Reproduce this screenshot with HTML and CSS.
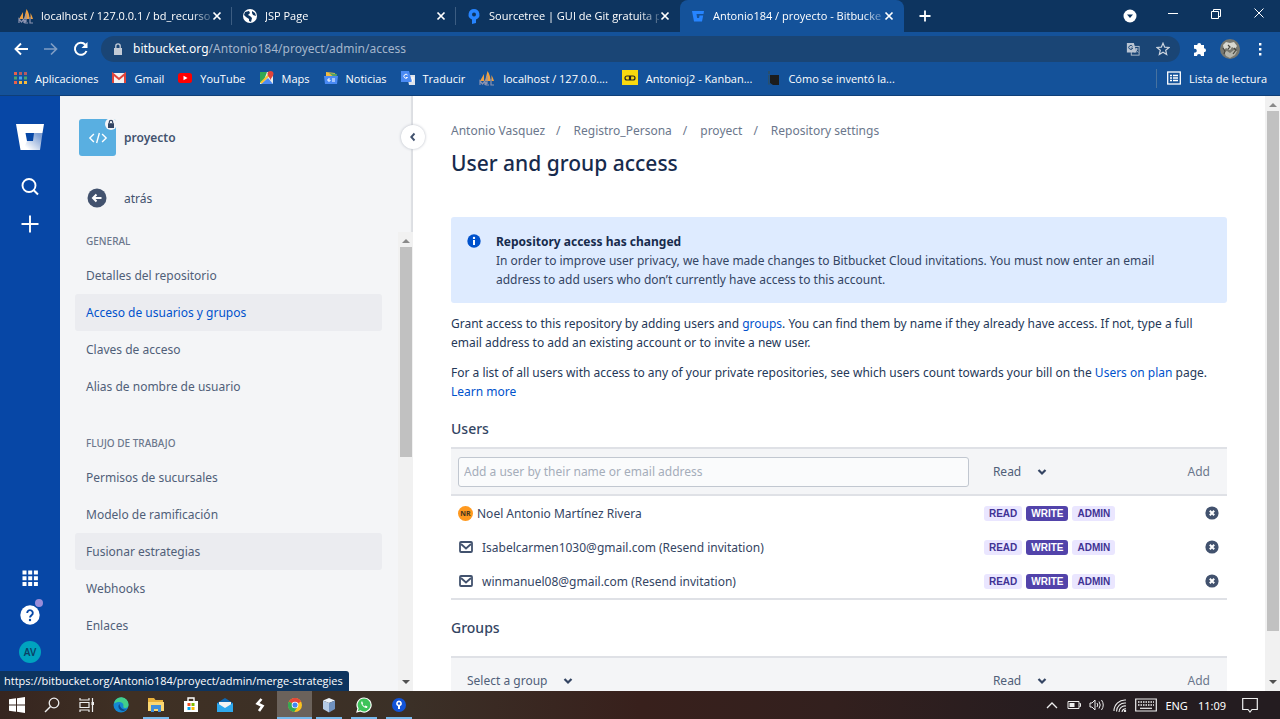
FILE: index.html
```html
<!DOCTYPE html>
<html lang="es">
<head>
<meta charset="utf-8">
<title>Antonio184 / proyecto - Bitbucket</title>
<link rel="stylesheet" href="styles.css">
</head>
<body>
<svg class="defs" aria-hidden="true">
  <symbol id="close" viewBox="0 0 10 10"><path d="M1.5 1.5l7 7M8.5 1.5l-7 7" stroke="#fff" stroke-width="1.7"/></symbol>
  <symbol id="sail" viewBox="0 0 16 16"><path d="M1 11L5 4v7zM6 11L8.500 1c2 3 3 6 3 10zM12.500 11V5c1 2 2 4 2.500 6z" fill="#f0a040"/><path d="M1 15v-4l2.500 3L6 11v4M7 12v3h3M8 6v8M12 9v6h3" stroke="#8c93b0" fill="none" stroke-width="1.200"/></symbol>
  <symbol id="translate" viewBox="0 0 16 16"><rect x="6" y="5" width="9" height="10" fill="none" stroke="currentColor"/><path d="M1 1h8l3 11H1z" fill="currentColor"/><path d="M7.500 5A2.300 2.300 0 1 0 7.700 7H5.500" fill="none" stroke="#1a4575" stroke-width="1.100"/><path d="M9 8h5M12 7v1c0 2-1 3-2 4M11 9l3 3" stroke="currentColor" fill="none"/></symbol>
  <symbol id="chev" viewBox="0 0 10 8"><path d="M1.500 2L5 5.500 8.500 2" fill="none" stroke="#344563" stroke-width="2.200"/></symbol>
  <symbol id="mail" viewBox="0 0 14 12"><rect x="1" y="1" width="12" height="10" rx="1" fill="none" stroke="#42526e" stroke-width="1.800"/><path d="M2 3l5 4.500L12 3" fill="none" stroke="#42526e" stroke-width="1.800"/></symbol>
  <symbol id="remove" viewBox="0 0 14 14"><circle cx="7" cy="7" r="6.600" fill="#42526e"/><path d="M4.800 4.800l4.400 4.400M9.200 4.800L4.800 9.200" stroke="#fff" stroke-width="2"/></symbol>
  <symbol id="up" viewBox="0 0 8 5"><path d="M0 5l4-4 4 4z" fill="#8a8a8a"/></symbol>
  <symbol id="down" viewBox="0 0 8 5"><path d="M0 0l4 4 4-4z" fill="#505050"/></symbol>
  <symbol id="pin" viewBox="0 0 16 16"><path d="M8 1a5.500 5.500 0 0 1 2 10.600V15L6 16v-4.400A5.500 5.500 0 0 1 8 1z" fill="#2684ff"/><circle cx="8" cy="6.500" r="2" fill="#0d345f"/></symbol>
</svg>

<header class="browser">
  <div class="tabstrip">
    <div class="tab"><svg class="i16"><use href="#sail"/></svg><span class="tab-title">localhost / 127.0.0.1 / bd_recurso</span><button class="x" aria-label="Cerrar"><svg><use href="#close"/></svg></button></div>
    <div class="tab"><svg class="i16" viewBox="0 0 16 16"><circle cx="8" cy="8" r="7" fill="#fff"/><path d="M3 4l4-1 1 2-2 2 2 1 2 2-1 4-2-1V11L4 9 2 7zM10 3l3 2 1 3-3-1-1-2z" fill="#0d345f"/></svg><span class="tab-title">JSP Page</span><button class="x" aria-label="Cerrar"><svg><use href="#close"/></svg></button></div>
    <div class="tab"><svg class="i16"><use href="#pin"/></svg><span class="tab-title">Sourcetree | GUI de Git gratuita p</span><button class="x" aria-label="Cerrar"><svg><use href="#close"/></svg></button></div>
    <div class="tab active"><svg class="i16" viewBox="0 0 16 16"><path d="M2 3h12l-.5 3H6.500l.6 4h2l.4-2.500h3.700L12 13.500H4z" fill="#2684ff"/></svg><span class="tab-title">Antonio184 / proyecto - Bitbucke</span><button class="x" aria-label="Cerrar"><svg><use href="#close"/></svg></button></div>
    <button class="newtab" aria-label="Nueva pestaña"><svg viewBox="0 0 12 12"><path d="M6 .5v11M.5 6h11" stroke="#fff" stroke-width="1.800"/></svg></button>
    <div class="window-controls">
      <button aria-label="Buscar pestañas"><svg class="i14" viewBox="0 0 14 14"><circle cx="7" cy="7" r="6.500" fill="#fff"/><path d="M4 5.500h6L7 9z" fill="#0d345f"/></svg></button>
      <button aria-label="Minimizar"><svg class="i14 raise" viewBox="0 0 14 14"><path d="M2 7.500h10" stroke="#fff"/></svg></button>
      <button aria-label="Restaurar"><svg class="i14 raise" viewBox="0 0 14 14"><path d="M2.500 5.500h7v7h-7zM4.500 5V3.500h7v7H10" fill="none" stroke="#fff"/></svg></button>
      <button aria-label="Cerrar ventana"><svg class="i14 raise" viewBox="0 0 14 14"><path d="M2.500 2.500l9 9M11.500 2.500l-9 9" stroke="#fff"/></svg></button>
    </div>
  </div>
  <div class="toolbar">
    <button aria-label="Atrás"><svg class="i16" viewBox="0 0 16 16"><path d="M15 8H3M8 2.500L2.500 8 8 13.500" fill="none" stroke="#fff" stroke-width="1.900"/></svg></button>
    <button aria-label="Adelante"><svg class="i16" viewBox="0 0 16 16"><path d="M1 8h12M8 2.500L13.500 8 8 13.500" fill="none" stroke="#7f9dc4" stroke-width="1.700"/></svg></button>
    <button aria-label="Recargar"><svg class="i16" viewBox="0 0 16 16"><path d="M13.500 10a6 6 0 1 1-1.200-6.300" fill="none" stroke="#fff" stroke-width="2"/><path d="M14.500 1v6H8.500z" fill="#fff"/></svg></button>
    <div class="omnibox">
      <svg class="lock" viewBox="0 0 10 12"><path d="M1 5h8v7H1z" fill="#c3cbd6"/><path d="M2.800 5V3a2.200 2.200 0 0 1 4.400 0v2" fill="none" stroke="#c3cbd6" stroke-width="1.300"/></svg>
      <span class="url"><b>bitbucket.org</b>/Antonio184/proyect/admin/access</span>
      <svg class="i14 tr"><use href="#translate"/></svg>
      <svg class="i14" viewBox="0 0 14 14"><path d="M7 1.200l1.700 4 4.300.3-3.300 2.800 1 4.300L7 10.300l-3.700 2.300 1-4.300L1 5.500l4.300-.3z" fill="none" stroke="#cdd5df" stroke-width="1.200"/></svg>
    </div>
    <button aria-label="Extensiones"><svg class="i16" viewBox="0 0 16 16"><path d="M2 4h3.200a2 2 0 1 1 4 0H12v3.200a2 2 0 1 1 0 4V15H9a2 2 0 1 0-4 0H2v-3.500a2 2 0 1 0 0-3.700z" fill="#fff"/></svg></button>
    <button aria-label="Perfil"><svg class="i20" viewBox="0 0 20 20"><circle cx="10" cy="10" r="10" fill="#77776f"/><path d="M3 6l3-3 4 1 4-1 3 4-2 3-3-2-2 3-4-2-2 2z" fill="#d8d8d0"/><path d="M4 13l3-1 3 2 4-3 3 1-2 4-5 3-4-2z" fill="#b5b5ab"/><path d="M3 9l2 3-1 3M14 9l2 2-3 4M8 6l2 2-2 2" stroke="#45453f" fill="none" stroke-width="1.200"/></svg></button>
    <button aria-label="Menú"><svg class="i16" viewBox="0 0 16 16"><path d="M7 2h2.400v2.400H7zM7 7h2.400v2.400H7zM7 12h2.400v2.400H7z" fill="#fff"/></svg></button>
  </div>
  <nav class="bookmarks">
    <a href="#"><svg class="i14" viewBox="0 0 14 14"><path d="M1 1h3v3H1zM1 10h3v3H1z" fill="#e8604c"/><path d="M6 1h3v3H6zM11 1h3v3h-3z" fill="#b55b62"/><path d="M1 5.500h3v3H1zM11 5.500h3v3h-3z" fill="#4fa36a"/><path d="M6 5.500h3v3H6z" fill="#4aa3f0"/><path d="M6 10h3v3H6zM11 10h3v3h-3z" fill="#f4bb3e"/></svg>Aplicaciones</a>
    <a href="#"><svg class="i14" viewBox="0 0 14 14"><path d="M0 2h14v10H0z" fill="#f4f1f0"/><path d="M1 12V3l6 5 6-5v9" fill="none" stroke="#e0443a" stroke-width="2"/></svg>Gmail</a>
    <a href="#"><svg class="i14" viewBox="0 0 14 14"><rect y="2" width="14" height="10" rx="2.500" fill="#f00"/><path d="M5.500 4.800v4.400L9.500 7z" fill="#fff"/></svg>YouTube</a>
    <a href="#"><svg class="i14" viewBox="0 0 14 14"><path d="M0 1h13v12H0z" fill="#e9ece9"/><path d="M0 1h7L4 9l-4 3z" fill="#34a853"/><path d="M1 13l7-6 5 6z" fill="#4a8af4"/><path d="M1 12L10 3" stroke="#fbc02d" stroke-width="2"/><path d="M10.500 0a3 3 0 0 1 3 3c0 2-2 3-3 6-1-3-3-4-3-6a3 3 0 0 1 3-3z" fill="#e0443a"/></svg>Maps</a>
    <a href="#"><svg class="i14" viewBox="0 0 14 14"><path d="M2 1l9 1v6H2z" fill="#f4bb3e"/><path d="M5 2l8 1-1 5z" fill="#4fa36a"/><path d="M0 5h14l-1 8H1z" fill="#4a8af4"/><path d="M6 8H4v2h2V9M8 8h3M8 10h3" stroke="#fff" fill="none"/></svg>Noticias</a>
    <a href="#"><svg class="i14" viewBox="0 0 14 14"><path d="M6 4h8v10H8z" fill="#dfe4ea"/><path d="M0 0h8l3 11H0z" fill="#4a8af4"/><path d="M6.500 4A2 2 0 1 0 6.500 6.500H5M10 7h3M12 8l-1 3" fill="none" stroke="#fff"/></svg>Traducir</a>
    <a href="#"><svg class="i16"><use href="#sail"/></svg>localhost / 127.0.0....</a>
    <a href="#"><svg class="i16" viewBox="0 0 16 16"><path d="M0 0h16v15H0z" fill="#f8d90f"/><path d="M7.500 6H5a2 2 0 0 0 0 4h2.500zM8.500 6H11a2 2 0 0 1 0 4H8.500z" fill="none" stroke="#222" stroke-width="1.200"/></svg>Antonioj2 - Kanban...</a>
    <a href="#"><svg class="i14" viewBox="0 0 14 14"><path d="M4 4h9v10H7L4 12z" fill="#1c1c1c"/><path d="M2 0h2v3H2zM2 4h1.500v8l2 1.500H2z" fill="#274f6f"/></svg>Cómo se inventó la...</a>
    <a href="#" class="reading"><svg class="i14" viewBox="0 0 14 14"><rect x=".7" y="1" width="12.600" height="12" fill="none" stroke="#fff" stroke-width="1.300"/><path d="M3 4.500h2M6 4.500h5M3 7h2M6 7h5M3 9.500h2M6 9.500h5" stroke="#fff" stroke-width="1.300"/></svg>Lista de lectura</a>
  </nav>
</header>

<div class="page">
  <nav class="rail">
    <button aria-label="Bitbucket"><svg class="logo" viewBox="0 0 28 26"><defs><linearGradient id="lg" x1="1" y1="0.300" x2="0.300" y2="1"><stop offset="0" stop-color="#7f9fd2"/><stop offset="1" stop-color="#fff"/></linearGradient></defs><path d="M0 0h28l-1.500 9h-17l1.500 8h7l-2 9H4.500z" fill="#fff"/><path d="M18 9h8.500L24 26H7l4-9h6z" fill="url(#lg)"/></svg></button>
    <button aria-label="Buscar"><svg class="i20" viewBox="0 0 20 20"><circle cx="9" cy="8.500" r="6.500" fill="none" stroke="#fff" stroke-width="1.900"/><path d="M13.500 13l4.500 4.500" stroke="#fff" stroke-width="2"/></svg></button>
    <button aria-label="Crear"><svg class="i20" viewBox="0 0 20 20"><path d="M10 1.500v17M1.500 10h17" stroke="#fff" stroke-width="1.900"/></svg></button>
    <span class="spacer"></span>
    <button aria-label="Aplicaciones"><svg class="i20" viewBox="0 0 20 20"><path d="M2.500 2.500h4v4h-4zM8.200 2.500h4v4h-4zM13.900 2.500h4v4h-4zM2.500 8.200h4v4h-4zM8.200 8.200h4v4h-4zM13.900 8.200h4v4h-4zM2.500 13.900h4v4h-4zM8.200 13.900h4v4h-4zM13.900 13.900h4v4h-4z" fill="#fff"/></svg></button>
    <button class="help" aria-label="Ayuda"><svg class="i20" viewBox="0 0 20 20"><circle cx="10" cy="10" r="9.700" fill="#fff"/><path d="M7.200 8a2.800 2.800 0 1 1 4.300 2.300c-1 .7-1.500 1-1.500 2.300" fill="none" stroke="#0747a6" stroke-width="1.900"/><circle cx="10" cy="15" r="1.200" fill="#0747a6"/></svg><i class="dot"></i></button>
    <button aria-label="Cuenta"><span class="avatar">AV</span></button>
  </nav>

  <aside class="side">
    <div class="repo"><span class="repo-icon"><svg viewBox="0 0 22 14"><path d="M6.500 2.500L2 7l4.500 4.500M15.500 2.500L20 7l-4.500 4.500M12.500 1.500l-3 11" fill="none" stroke="#fff" stroke-width="1.500"/></svg><i class="repo-lock"><svg viewBox="0 0 10 10"><path d="M2 4.200h6V9H2z" fill="#344563"/><path d="M3.300 4V3a1.700 1.700 0 0 1 3.400 0v1" fill="none" stroke="#344563" stroke-width="1.200"/></svg></i></span><strong>proyecto</strong></div>
    <a class="back" href="#"><svg class="i20" viewBox="0 0 20 20"><circle cx="10" cy="10" r="9.500" fill="#42526e"/><path d="M14.500 10H6.500M9.500 6.500L6 10l3.500 3.500" fill="none" stroke="#fff" stroke-width="2"/></svg>atrás</a>
    <button class="collapse" aria-label="Contraer"><svg viewBox="0 0 8 10"><path d="M5.500 1.500L2.300 5l3.200 3.500" fill="none" stroke="#42526e" stroke-width="1.900"/></svg></button>
    <div class="side-scroll">
      <nav class="menu">
        <h3>GENERAL</h3>
        <a href="#">Detalles del repositorio</a>
        <a href="#" class="hl current">Acceso de usuarios y grupos</a>
        <a href="#">Claves de acceso</a>
        <a href="#">Alias de nombre de usuario</a>
        <h3>FLUJO DE TRABAJO</h3>
        <a href="#">Permisos de sucursales</a>
        <a href="#">Modelo de ramificación</a>
        <a href="#" class="hl">Fusionar estrategias</a>
        <a href="#">Webhooks</a>
        <a href="#">Enlaces</a>
      </nav>
      <div class="scrollbar"><svg><use href="#up"/></svg><span class="track"><i class="thumb short"></i></span><svg><use href="#down"/></svg></div>
    </div>
  </aside>

  <main class="main">
    <nav class="crumbs"><a href="#">Antonio Vasquez</a><span>/</span><a href="#">Registro_Persona</a><span>/</span><a href="#">proyect</a><span>/</span><a href="#">Repository settings</a></nav>
    <h1>User and group access</h1>
    <section class="notice">
      <svg class="i14" viewBox="0 0 14 14"><circle cx="7" cy="7" r="6.700" fill="#0052cc"/><path d="M6 6h2v5H6z" fill="#fff"/><circle cx="7" cy="3.900" r="1.200" fill="#fff"/></svg>
      <div><strong>Repository access has changed</strong><p>In order to improve user privacy, we have made changes to Bitbucket Cloud invitations. You must now enter an email address to add users who don’t currently have access to this account.</p></div>
    </section>
    <p class="para">Grant access to this repository by adding users and <a href="#">groups</a>. You can find them by name if they already have access. If not, type a full email address to add an existing account or to invite a new user.</p>
    <p class="para">For a list of all users with access to any of your private repositories, see which users count towards your bill on the <a href="#">Users on plan</a> page. <a href="#">Learn more</a></p>

    <h2>Users</h2>
    <table>
      <thead><tr>
        <th><input type="text" aria-label="User" placeholder="Add a user by their name or email address"></th>
        <th><span class="pick"><select aria-label="User access"><option>Read</option></select><svg><use href="#chev"/></svg></span></th>
        <th><button class="add">Add</button></th>
      </tr></thead>
      <tbody>
        <tr><td><div class="who"><span class="nr">NR</span>Noel Antonio Martínez Rivera</div></td><td><div class="perms"><button>READ</button><button class="on">WRITE</button><button>ADMIN</button></div></td><td><button class="rm" aria-label="Remove"><svg class="i14"><use href="#remove"/></svg></button></td></tr>
        <tr><td><div class="who invited"><svg class="mail"><use href="#mail"/></svg>Isabelcarmen1030@gmail.com (Resend invitation)</div></td><td><div class="perms"><button>READ</button><button class="on">WRITE</button><button>ADMIN</button></div></td><td><button class="rm" aria-label="Remove"><svg class="i14"><use href="#remove"/></svg></button></td></tr>
        <tr><td><div class="who invited"><svg class="mail"><use href="#mail"/></svg>winmanuel08@gmail.com (Resend invitation)</div></td><td><div class="perms"><button>READ</button><button class="on">WRITE</button><button>ADMIN</button></div></td><td><button class="rm" aria-label="Remove"><svg class="i14"><use href="#remove"/></svg></button></td></tr>
      </tbody>
    </table>

    <h2 class="groups">Groups</h2>
    <table>
      <thead><tr>
        <th><span class="pick"><select aria-label="Group"><option>Select a group</option></select><svg><use href="#chev"/></svg></span></th>
        <th><span class="pick"><select aria-label="Group access"><option>Read</option></select><svg><use href="#chev"/></svg></span></th>
        <th><button class="add">Add</button></th>
      </tr></thead>
    </table>
  </main>
  <div class="scrollbar page-bar"><svg><use href="#up"/></svg><span class="track"><i class="thumb long"></i></span><svg><use href="#down"/></svg></div>
  <div class="status">https://bitbucket.org/Antonio184/proyect/admin/merge-strategies</div>
</div>

<footer class="taskbar">
  <div class="apps">
    <button aria-label="Inicio"><svg class="i16" viewBox="0 0 16 16"><path d="M0 2.300L7 1.300v6.200H0zM8 1.200L16 0v7.500H8zM0 8.500h7v6.200l-7-1zM8 8.500h8V16l-8-1.200z" fill="#fff"/></svg></button>
    <button aria-label="Buscar"><svg class="i16" viewBox="0 0 16 16"><circle cx="10" cy="6" r="4.800" fill="none" stroke="#eee" stroke-width="1.300"/><path d="M6.500 9.500L1 15" stroke="#eee" stroke-width="1.400"/></svg></button>
    <button aria-label="Vista de tareas"><svg class="i16" viewBox="0 0 16 16"><path d="M1 1v2h9V1M1 15v-2h9v2M1 5.500h9v5H1zM13.500 1v14" fill="none" stroke="#eee" stroke-width="1.200"/><path d="M12.500 5h2.500v3h-2.500z" fill="#eee"/></svg></button>
    <button aria-label="Edge"><svg class="i16" viewBox="0 0 16 16"><circle cx="8" cy="8" r="7.500" fill="#1587d2"/><path d="M1 7a7.200 7.200 0 0 1 14.500 1c0 2-1.500 3-3 3-2 0-2.500-1-2-2 0-3-2-4-4-4S2 5.500 1 7z" fill="#42cf8b"/><path d="M6.500 7C4 9 6 14 10.500 14l3-1.500C10 13 7 11 6.500 7z" fill="#0c4a8c"/></svg></button>
    <button class="open" aria-label="Explorador"><svg class="i16" viewBox="0 0 16 16"><path d="M0 1h6l1.500 2H15v11H0z" fill="#e9b13b"/><path d="M0 5h16v9H0z" fill="#fbd772"/><path d="M3 8h10v7h-3v-3H6v3H3z" fill="#3f8edb"/></svg></button>
    <button aria-label="Store"><svg class="i16" viewBox="0 0 16 16"><path d="M1 4h14v11H1z" fill="#fff"/><path d="M5 4V1h6v3" fill="none" stroke="#fff" stroke-width="1.400"/><path d="M4.500 6h3v3h-3z" fill="#f25022"/><path d="M8.500 6h3v3h-3z" fill="#7fba00"/><path d="M4.500 10h3v3h-3z" fill="#00a4ef"/><path d="M8.500 10h3v3h-3z" fill="#ffb900"/></svg></button>
    <button aria-label="Correo"><svg class="i16" viewBox="0 0 16 16"><path d="M0 6l8-5 8 5v9H0z" fill="#0f67b1"/><path d="M2 5h12v6H2z" fill="#f4f4f4"/><path d="M0 6l8 5 8-5v9H0z" fill="#2fa9ee"/></svg></button>
    <button aria-label="Aplicación"><svg class="i16" viewBox="0 0 16 16"><path d="M9.500 2L5.500 6.500l5 2.500L7 14" fill="none" stroke="#fff" stroke-width="2.600"/></svg></button>
    <button class="open now" aria-label="Chrome"><svg class="i14" viewBox="0 0 16 16"><circle cx="8" cy="8" r="8" fill="#fcc31e"/><path d="M8 8L1 4a8 8 0 0 1 14 0z" fill="#e5473a"/><path d="M8 8L1 4a8 8 0 0 0 6 12l4-6z" fill="#34a853"/><circle cx="8" cy="8" r="3.800" fill="#fff"/><circle cx="8" cy="8" r="2.900" fill="#4285f4"/></svg></button>
    <button class="open" aria-label="NetBeans"><svg class="i16" viewBox="0 0 16 16"><path d="M2 3.500L8 1l6 2.500L8 6z" fill="#edf3fa"/><path d="M2 3.500L8 6v9.500L2 12z" fill="#b5cbe6"/><path d="M14 3.500L8 6v9.500l6-3.500z" fill="#6f91bf"/></svg></button>
    <button class="open" aria-label="WhatsApp"><svg class="i16" viewBox="0 0 16 16"><path d="M8 1a7 7 0 1 1-3.500 13L1 15l1-3.500A7 7 0 0 1 8 1z" fill="#3dc35a" stroke="#fff" stroke-width="1.200"/><path d="M5.500 4.500c-1.500 2 2.500 7 5.500 6.500l.5-1.500-2-1-1 1L6.500 7.500l.5-1-.7-2z" fill="#fff"/></svg></button>
    <button class="open" aria-label="Sourcetree"><svg class="i16" viewBox="0 0 16 16"><circle cx="8" cy="8" r="7" fill="#1254d8"/><path d="M8 3.500a3 3 0 0 1 1 5.800V12H7V9.300a3 3 0 0 1 1-5.800z" fill="#fff"/><circle cx="8" cy="6.500" r="1.200" fill="#1254d8"/></svg></button>
  </div>
  <div class="tray">
    <svg class="i14" viewBox="0 0 14 14"><path d="M2 10l5-5 5 5" fill="none" stroke="#eee" stroke-width="1.300"/></svg>
    <svg class="i14" viewBox="0 0 14 14"><path d="M1 3.500h11v7H1zM12.500 5.500h1v3h-1" fill="none" stroke="#eee"/><path d="M2.500 5h5v4h-5z" fill="#eee"/></svg>
    <svg class="i16" viewBox="0 0 16 16"><path d="M1 6h2l3-3v10l-3-3H1zM8 6q1.500 2 0 4M10 4.500q2.500 3.500 0 7M12.500 3q3.500 5 0 10" fill="none" stroke="#eee"/></svg>
    <svg class="i14" viewBox="0 0 14 14"><path d="M1 13A11 11 0 0 1 13 2M3.500 13.500A8.500 8.500 0 0 1 13 5M6 14a6 6 0 0 1 7-6M9 14a3.500 3.500 0 0 1 4-3.200" fill="none" stroke="#eee" stroke-width="1.100"/><circle cx="12" cy="13" r="1.200" fill="#eee"/></svg>
    <svg class="kbd" viewBox="0 0 22 14"><path d="M.7 1h20.600v12H.7z" fill="none" stroke="#eee" stroke-width="1.200"/><path d="M3 4h16M3 7h16" stroke="#eee" stroke-width="1.400" stroke-dasharray="1.500 1"/><path d="M5 10.300h12" stroke="#eee" stroke-width="1.200"/></svg>
    <span>ENG</span><span class="clock">11:09</span>
    <svg class="i16" viewBox="0 0 16 16"><path d="M.7 1.500h14.600v11H10L8 15l-2-2.500H.7z" fill="none" stroke="#eee" stroke-width="1.200"/></svg>
  </div>
</footer>
</body>
</html>
```
FILE: styles.css
```css
* { box-sizing: border-box; }
body {
  margin: 0; height: 100vh; display: flex; flex-direction: column; overflow: hidden;
  font: 12px/19px "Noto Sans", "Open Sans", sans-serif; color: #344563; background: #fff;
}
button { border: 0; padding: 0; background: none; font: inherit; color: inherit; display: flex; align-items: center; justify-content: center; }
a { text-decoration: none; color: #0052cc; }
h1, h2, h3, p { margin: 0; }
svg { display: block; flex: none; }
.defs { width: 0; height: 0; position: absolute; }
.i14 { width: 14px; height: 14px; }
.i16 { width: 16px; height: 16px; }
.i20 { width: 20px; height: 20px; }

/* browser chrome */
.browser { background: #14529a; color: #fff; font-family: "Open Sans", sans-serif; font-size: 11px; flex: none; border-bottom: 1px solid #0f3f78; }
.tabstrip { display: flex; height: 32px; background: #0d345f; padding-left: 8px; }
.tab { flex: 0 1 224px; min-width: 0; display: flex; align-items: center; gap: 7px; padding: 0 10px; position: relative; }
.tab:not(.active)::after { content: ""; position: absolute; right: 0; top: 7px; width: 1px; height: 18px; background: #3c5d82; }
.tab:nth-child(3)::after { display: none; }
.tab.active { background: #14529a; border-radius: 8px 8px 0 0; }
.tab-title { flex: 1; min-width: 0; line-height: 17px; margin: 0 -6px 2px 0; overflow: hidden; white-space: nowrap; mask-image: linear-gradient(90deg, #000 150px, transparent 176px); }
.x svg { width: 10px; height: 10px; }
.newtab { width: 42px; }
.newtab svg { width: 12px; height: 12px; }
.window-controls { margin-left: auto; display: flex; }
.window-controls button { width: 43px; }
.raise { margin-bottom: 6px; }
.toolbar { display: flex; align-items: center; height: 33px; padding: 0 5px 0 6px; }
.toolbar button { width: 30px; height: 30px; }
.omnibox { flex: 1; display: flex; align-items: center; gap: 16px; height: 26px; margin: 0 5px; padding: 0 10px 0 12px; border-radius: 13px; background: #1a4575; font: 12px/19px "Noto Sans", sans-serif; }
.lock { width: 10px; height: 12px; }
.url { flex: 1; color: #a4b6cc; margin-left: -6px; }
.url b { color: #fff; font-weight: 400; }
.tr { color: #b9c4d2; }
.bookmarks { display: flex; align-items: center; gap: 14px; height: 30px; padding: 0 13px 4px; white-space: nowrap; }
.bookmarks a { display: flex; align-items: center; gap: 8px; color: #fff; }
.bookmarks .reading { margin-left: auto; border-left: 1px solid #47729f; padding-left: 10px; }

/* page */
.page { flex: 1; min-height: 0; display: flex; position: relative; }
.rail { width: 60px; flex: none; background: #0747a6; display: flex; flex-direction: column; align-items: center; padding: 22px 0 21px; }
.rail button { height: 37px; width: 40px; }
.rail button:first-child { margin-bottom: 13px; }
.logo { width: 28px; height: 26px; }
.spacer { flex: 1; }
.help { position: relative; }
.dot { position: absolute; right: 7px; top: 3px; width: 8px; height: 8px; border-radius: 50%; background: #998dd9; }
.avatar { width: 22px; height: 22px; border-radius: 50%; background: #00a3bf; color: #0b3f66; font-weight: 600; font-size: 10px; line-height: 22px; }
.side { width: 353px; flex: none; background: #f4f5f7; display: flex; flex-direction: column; position: relative; box-shadow: inset -2px 0 1px #dcdee2; }
.repo { display: flex; align-items: center; gap: 8px; padding: 23px 0 0 19px; color: #42526e; }
.repo strong { font-weight: 600; }
.repo-icon { width: 37px; height: 37px; border-radius: 3px; background: #59afe1; display: flex; align-items: center; justify-content: center; position: relative; }
.repo-icon > svg { width: 20px; height: 14px; }
.repo-lock { position: absolute; right: -1px; top: -1px; width: 12px; height: 12px; border-radius: 50%; background: #f4f5f7; padding: 1px; }
.repo-lock svg { width: 10px; height: 10px; }
.back { display: flex; align-items: center; gap: 17px; margin: 32px 0 0 27px; height: 20px; color: #42526e; }
.collapse { position: absolute; right: -12px; top: 29px; width: 24px; height: 24px; border-radius: 50%; background: #fff; box-shadow: 0 0 3px #b5bac4; z-index: 1; }
.collapse svg { width: 8px; height: 10px; }
.side-scroll { flex: 1; min-height: 0; margin-top: 24px; display: flex; }
.menu { flex: 1; padding: 0 16px 0 15px; overflow: hidden; }
.menu h3 { font: 500 10px/18px "Noto Sans", sans-serif; color: #6b778c; padding-left: 11px; margin-bottom: 7px; }
.menu a + h3 { margin-top: 29px; }
.menu a { display: block; height: 37px; line-height: 37px; padding-left: 11px; border-radius: 3px; color: #505f79; }
.menu .hl { background: #ebecf0; }
.menu .current { color: #0052cc; }
.scrollbar { width: 15px; flex: none; background: #f1f1f1; display: flex; flex-direction: column; align-items: center; padding: 6px 0; gap: 4px; }
.scrollbar svg { width: 8px; height: 5px; }
.track { flex: 1; width: 12px; }
.thumb { display: block; background: #c1c1c1; }
.short { height: 49%; }
.long { height: 92%; }
.main { flex: 1; min-width: 0; padding: 25px 38px 0; overflow: hidden; }
.crumbs { display: flex; gap: 11px; }
.crumbs a, .crumbs span { color: #6b778c; }
.crumbs a + span + a { margin-left: 2px; }
h1 { font-size: 21px; line-height: 28px; font-weight: 500; color: #172b4d; margin-top: 9px; }
.notice { display: flex; gap: 15px; margin-top: 40px; padding: 15px 40px 14px 16px; background: #deebff; border-radius: 3px; }
.notice svg { margin-top: 2px; }
.notice strong { color: #172b4d; display: block; font-weight: 700; }
.para { margin-top: 11px; padding-right: 10px; color: #253858; }
h2 { font-size: 14px; line-height: 20px; font-weight: 500; margin: 18px 0 8px; }
h2.groups { margin-bottom: 18px; }
table { width: 100%; table-layout: fixed; border-spacing: 0; border-bottom: 2px solid #dfe1e6; }
th, td { padding: 0; text-align: left; font-weight: 400; }
th { height: 49px; background: #f4f5f7; border: solid #dfe1e6; border-width: 2px 0; }
td { height: 34px; }
th:nth-child(1) { width: 67%; padding: 0 2px 0 7px; }
th:nth-child(2), td:nth-child(2) { width: 21%; padding-left: 13px; }
th:nth-child(3) { padding-right: 17px; }
td:nth-child(3) { padding-right: 8px; }
input { display: block; width: 100%; height: 30px; border: 1px solid #c1c7d0; border-radius: 3px; background: #fafbfc; padding: 0 5px; font: inherit; }
input::placeholder { color: #a5adba; }
.pick { display: inline-flex; align-items: center; gap: 15px; padding-left: 9px; }
.pick svg { width: 10px; height: 8px; }
select { appearance: none; border: 0; background: none; padding: 0; font: inherit; color: #505f79; }
.add, .rm { margin-left: auto; }
.add { color: #6b778c; }
.who { display: flex; align-items: center; gap: 4px; padding-left: 7px; }
.invited { gap: 9px; padding-left: 8px; }
.mail { width: 14px; height: 12px; }
.nr { width: 15px; height: 15px; border-radius: 50%; background: #ff991f; color: #42351f; font-size: 7px; line-height: 15px; font-weight: 700; text-align: center; }
.perms { display: flex; gap: 4px; }
.perms button { font: 700 10px/15px "Liberation Sans", sans-serif; padding: 0 5px; border-radius: 3px; background: #eae6ff; color: #403294; }
.perms .on { background: #5243aa; color: #fff; }
.status { position: absolute; left: 0; bottom: 0; height: 20px; padding: 0 6px 0 4px; background: #0d345f; color: #fff; font-family: "Open Sans", sans-serif; font-size: 11px; border-radius: 0 3px 0 0; }

/* taskbar */
.taskbar { flex: none; height: 28px; display: flex; justify-content: space-between; background: linear-gradient(90deg, #36251f, #3f3024 10%, #3b3027 32%, #38201c 50%, #33201e 65%, #241c20 85%); color: #fff; font-size: 11px; }
.apps { width: 416px; display: flex; }
.apps button { flex: 1; }
.apps .open { background: linear-gradient(#76b9ed, #76b9ed) center bottom / 26px 2px no-repeat; }
.apps .now { background: linear-gradient(#6b625b 26px, #76b9ed 26px); }
.tray { display: flex; align-items: center; gap: 8px; padding-right: 22px; }
.kbd { width: 22px; height: 14px; }
.clock { margin: 0 8px 0 2px; }
```
